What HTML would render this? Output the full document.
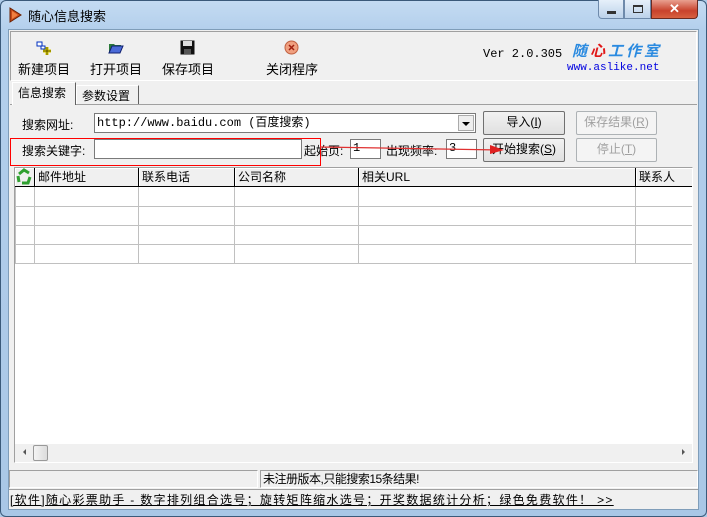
<!DOCTYPE html><html><head><meta charset="utf-8"><style>
*{margin:0;padding:0;box-sizing:border-box}
body{width:707px;height:517px;position:relative;overflow:hidden;background:#aecbe8;font:12px "Liberation Sans","Noto Sans CJK SC","WenQuanYi Zen Hei",sans-serif;color:#000}
.a{position:absolute}
.win{left:0;top:0;width:707px;height:517px;border:1px solid #3b5a7a;border-radius:6px;background:linear-gradient(#c4dbf2,#b3cfec 30px,#a9c7e6)}
.client{left:8px;top:29px;width:691px;height:481px;background:#f0f0f0;border:1px solid #7f9db9}
.sunk{border:1px solid;border-color:#a0a0a0 #fff #fff #a0a0a0}
.btn{border:1px solid #707070;background:linear-gradient(#f2f2f2,#e0e0e0);text-align:center;line-height:21px;font-size:12px;border-radius:2px}
.dis{color:#a0a0a0;border-color:#adb2b5;background:#f4f4f4}
.inp{background:#fff;border:1px solid #7a7a7a;font-family:"Liberation Mono","Noto Sans CJK SC",monospace;font-size:12px;line-height:17px;padding-left:2px}
.th{top:0;height:19px;border-right:1px solid #000;border-bottom:1px solid #000;background:#f0f0f0;line-height:18px;padding-left:3px;font-size:12px;box-shadow:inset 1px 1px #fff}
</style></head><body>
<div class="a win"></div>
<svg class="a" style="left:7px;top:7px" width="16" height="16"><path d="M3 1 L14 8 L3 15 Z" fill="#c84a1a" stroke="#6a2000"/><path d="M5 4 L11 8 L5 12Z" fill="#f08040"/></svg>
<div class="a" style="left:28px;top:6px;font-size:13px">随心信息搜索</div>
<div class="a" style="left:598px;top:0;width:26px;height:19px;border:1px solid #6e8aab;border-top:none;border-radius:0 0 0 4px;background:linear-gradient(#e6f0fa,#bcd2ea)"><div class="a" style="left:8px;top:11px;width:9px;height:3px;background:#333"></div></div>
<div class="a" style="left:624px;top:0;width:27px;height:19px;border:1px solid #6e8aab;border-top:none;background:linear-gradient(#e6f0fa,#bcd2ea)"><div class="a" style="left:8px;top:5px;width:10px;height:8px;border:1px solid #333;border-top-width:2px"></div></div>
<div class="a" style="left:651px;top:0;width:47px;height:19px;border:1px solid #6b2a20;border-top:none;border-radius:0 0 4px 0;background:linear-gradient(#e8a090,#c8422c 60%,#d86040);color:#fff;text-align:center;font-weight:bold;font-size:13px;line-height:17px">✕</div>
<div class="a client"></div>
<div class="a sunk" style="left:10px;top:31px;width:687px;height:50px"></div>
<svg class="a" style="left:36px;top:41px" width="16" height="15"><rect x="1" y="1" width="5" height="4" fill="#fff" stroke="#0030c0"/><rect x="5" y="5" width="4" height="3" fill="#fff" stroke="#0030c0"/><path d="M11 6v8M7 10h8" stroke="#d8c800" stroke-width="3"/><path d="M11 6v8M7 10h8" stroke="#000" stroke-width="0.5" fill="none"/></svg>
<svg class="a" style="left:108px;top:41px" width="16" height="14"><path d="M1 3h5l1 1h6v2H4L1 12Z" fill="#2a7a3a"/><path d="M1 12 L4 5 H15 L12 12Z" fill="#4a6ad8" stroke="#102070"/></svg>
<svg class="a" style="left:180px;top:40px" width="15" height="15"><rect x="0.5" y="0.5" width="14" height="14" fill="#111"/><rect x="3" y="1" width="9" height="5" fill="#ddd"/><rect x="4" y="9" width="7" height="5" fill="#555"/></svg>
<svg class="a" style="left:284px;top:40px" width="15" height="15"><circle cx="7.5" cy="7.5" r="6.5" fill="#f0a080" stroke="#c06040"/><path d="M5 5l5 5M10 5l-5 5" stroke="#a02010" stroke-width="1.5"/></svg>
<div class="a" style="left:18px;top:59px;font-size:13px">新建项目</div>
<div class="a" style="left:90px;top:59px;font-size:13px">打开项目</div>
<div class="a" style="left:162px;top:59px;font-size:13px">保存项目</div>
<div class="a" style="left:266px;top:59px;font-size:13px">关闭程序</div>
<div class="a" style="left:483px;top:47px;font-family:'Liberation Mono',monospace;font-size:12px">Ver 2.0.305</div>
<div class="a" style="left:572px;top:40px;font-size:15px;color:#2a8ae0;letter-spacing:3px;font-weight:bold;font-style:italic">随<span style="color:#e01818">心</span>工作室</div>
<div class="a" style="left:567px;top:62px;font-family:'Liberation Mono',monospace;font-size:11px;color:#0000e0">www.aslike.net</div>
<div class="a" style="left:10px;top:104px;width:687px;height:1px;background:#a0a0a0"></div>
<div class="a" style="left:12px;top:82px;width:64px;height:23px;background:#f0f0f0;border:1px solid #fff;border-right-color:#606060;border-bottom:none;padding:1px 0 0 5px;font-size:12px">信息搜索</div>
<div class="a" style="left:76px;top:85px;width:63px;height:19px;border:1px solid #fff;border-right-color:#606060;border-bottom:none;padding:1px 0 0 5px;font-size:12px">参数设置</div>
<div class="a" style="left:22px;top:116px">搜索网址:</div>
<div class="a inp" style="left:94px;top:113px;width:382px;height:20px;line-height:18px">http://www.baidu.com (百度搜索)</div>
<div class="a" style="left:458px;top:115px;width:16px;height:16px;background:#eee;border:1px solid #aaa"><div class="a" style="left:3px;top:6px;border:4px solid transparent;border-top:4px solid #000"></div></div>
<div class="a btn" style="left:483px;top:111px;width:82px;height:24px">导入(<u>I</u>)</div>
<div class="a btn dis" style="left:576px;top:111px;width:81px;height:24px">保存结果(<u>R</u>)</div>
<div class="a btn" style="left:483px;top:138px;width:82px;height:24px">开始搜索(<u>S</u>)</div>
<div class="a btn dis" style="left:576px;top:138px;width:81px;height:24px">停止(<u>T</u>)</div>
<div class="a" style="left:22px;top:142px">搜索关键字:</div>
<div class="a inp" style="left:94px;top:139px;width:208px;height:20px"></div>
<div class="a" style="left:304px;top:142px">起始页:</div>
<div class="a inp" style="left:350px;top:139px;width:31px;height:20px">1</div>
<div class="a" style="left:386px;top:142px">出现频率:</div>
<div class="a inp" style="left:446px;top:139px;width:31px;height:20px">3</div>
<div class="a" style="left:10px;top:138px;width:311px;height:28px;border:1px solid #f00"></div>
<svg class="a" style="left:320px;top:144px" width="185" height="12"><path d="M0 3 L180 6" stroke="#e03030" stroke-width="1.2"/><path d="M170 1 L184 6 L170 10Z" fill="#e02020"/></svg>
<div class="a" style="left:14px;top:167px;width:679px;height:296px;background:#fff;border:1px solid;border-color:#a0a0a0 #fff #fff #a0a0a0;overflow:hidden">
<div class="a th" style="left:0;width:20px;padding:0"><svg width="19" height="18"><path d="M4 6 L9 2 L14 5 M15 9 L13 15 L7 15 M4 14 L3 8" stroke="#30a030" stroke-width="3" fill="none"/></svg></div>
<div class="a th" style="left:20px;width:104px">邮件地址</div>
<div class="a th" style="left:124px;width:96px">联系电话</div>
<div class="a th" style="left:220px;width:124px">公司名称</div>
<div class="a th" style="left:344px;width:277px">相关URL</div>
<div class="a th" style="left:621px;width:70px">联系人</div>
<svg class="a" style="left:0;top:19px" width="679" height="80"><g stroke="#c0c0c0"><path d="M0 19.5H679M0 38.5H679M0 57.5H679M0 76.5H679"/><path d="M0.5 0V77M19.5 0V77M123.5 0V77M219.5 0V77M343.5 0V77M620.5 0V77"/></g></svg>
<div class="a" style="left:0;top:276px;width:677px;height:18px;background:#f0f0f0"><div class="a" style="left:18px;top:1px;width:15px;height:16px;border:1px solid #999;border-radius:2px;background:linear-gradient(90deg,#f4f4f4,#dcdcdc)"></div><div class="a" style="left:5px;top:5px;border:3px solid transparent;border-right:3px solid #555"></div><div class="a" style="left:667px;top:5px;border:3px solid transparent;border-left:3px solid #555"></div></div>
</div>
<div class="a sunk" style="left:9px;top:470px;width:249px;height:18px"></div>
<div class="a sunk" style="left:260px;top:470px;width:438px;height:18px;padding-left:2px;font-size:12px;line-height:16px;letter-spacing:-0.5px">未注册版本,只能搜索15条结果!</div>
<div class="a" style="left:9px;top:489px;width:689px;height:1px;background:#a0a0a0"></div>
<div class="a" style="left:10px;top:491px;font-size:12px;text-decoration:underline;white-space:nowrap;letter-spacing:1.3px">[软件]随心彩票助手 - 数字排列组合选号；旋转矩阵缩水选号；开奖数据统计分析；绿色免费软件！ &gt;&gt;</div>
</body></html>
